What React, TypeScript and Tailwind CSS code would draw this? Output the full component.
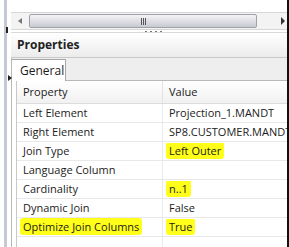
import React from 'react';

const rows: { name: string; value: string; markName?: boolean; markValue?: boolean }[] = [
  { name: 'Left Element', value: 'Projection_1.MANDT' },
  { name: 'Right Element', value: 'SP8.CUSTOMER.MANDT' },
  { name: 'Join Type', value: 'Left Outer', markValue: true },
  { name: 'Language Column', value: '' },
  { name: 'Cardinality', value: 'n..1', markValue: true },
  { name: 'Dynamic Join', value: 'False' },
  { name: 'Optimize Join Columns', value: 'True', markName: true, markValue: true },
];

const Mark = ({ children }: { children: React.ReactNode }) => (
  <span className="-mx-[3px] rounded-[3px] bg-[#ffff1a] px-[3px] py-[1px]">{children}</span>
);

export default function App() {
  return (
    <div
      className="flex h-[247px] w-[289px] overflow-hidden bg-white text-[11px] text-[#1b1b1b]"
      style={{ fontFamily: '"Open Sans", "Noto Sans", sans-serif' }}
    >
      {/* left sash */}
      <div className="relative w-[11px] shrink-0">
        <div className="absolute left-[4px] top-0 h-full w-[3px] bg-[#c3cad3]" />
        <div className="absolute left-[6px] top-[27px] h-[6px] w-[2px] bg-[#222]" />
        <div className="absolute left-[8px] top-[75px] h-0 w-0 border-y-[3px] border-l-[4px] border-y-transparent border-l-[#222]" />
      </div>

      <div className="flex min-w-0 flex-1 flex-col">
        <div className="h-[12px] shrink-0" />

        {/* horizontal scrollbar */}
        <div className="flex h-[18px] shrink-0 items-center border-y border-[#d6d6d6] bg-[#f3f3f3]">
          <div className="flex w-[18px] justify-center">
            <div className="h-0 w-0 border-y-[3px] border-r-[4px] border-y-transparent border-r-[#777]" />
          </div>
          <div className="relative flex h-[14px] flex-1 items-center justify-center rounded-[2px] border border-[#a0a0a8] bg-gradient-to-b from-[#f4f4f6] to-[#c9c9d3]">
            <div className="flex gap-[1px]">
              <div className="h-[7px] w-[1px] bg-[#555]" />
              <div className="h-[7px] w-[1px] bg-[#555]" />
              <div className="h-[7px] w-[1px] bg-[#555]" />
            </div>
          </div>
          <div className="flex w-[30px] justify-end pr-[2px]">
            <div className="h-0 w-0 border-y-[4px] border-l-[4px] border-y-transparent border-l-[#333]" />
          </div>
        </div>

        {/* sash */}
        <div className="flex h-[3px] shrink-0 justify-center gap-[3px] border-b border-[#d8d8d8] pl-[8px]">
          {[0, 1, 2, 3].map((i) => (
            <div key={i} className="mt-[1px] h-[1px] w-[2px] bg-[#777]" />
          ))}
        </div>

        {/* properties title */}
        <div className="flex h-[25px] shrink-0 items-center border-b border-[#c9c9c9] bg-gradient-to-b from-white to-[#ececec] pl-[6px]">
          <span className="text-[12px] font-bold text-[#222]">Properties</span>
        </div>

        {/* tab strip */}
        <div className="flex h-[23px] shrink-0 items-end border-b border-l border-[#b8b8b8] bg-[#eeeeee]">
          <div className="-mb-[1px] flex h-[22px] w-[54px] items-center border-r border-t border-[#a8a8a8] bg-white pl-[8px] text-[12px]">
            General
          </div>
        </div>

        {/* table */}
        <div className="flex flex-1 border-l border-[#b8b8b8] pl-[4px]">
          <div className="flex min-w-0 flex-1 flex-col border-l border-[#c8c8c8]">
            <div className="flex h-[23px] shrink-0 items-center border-b border-[#dcdcdc] bg-gradient-to-b from-white to-[#f1f1f1]">
              <div className="w-[145px] pl-[6px]">Property</div>
              <div className="h-full w-px bg-[#e2e2e2]" />
              <div className="pl-[6px]">Value</div>
            </div>
            {rows.map((r) => (
              <div key={r.name} className="flex h-[19px] shrink-0 items-center border-b border-[#e8e8e8]">
                <div className="w-[145px] shrink-0 whitespace-nowrap pl-[6px]">
                  {r.markName ? <Mark>{r.name}</Mark> : r.name}
                </div>
                <div className="h-full w-px shrink-0 bg-[#e6ebf0]" />
                <div className="min-w-0 flex-1 overflow-hidden whitespace-nowrap pl-[6px]">
                  {r.markValue ? <Mark>{r.value}</Mark> : r.value}
                </div>
              </div>
            ))}
            <div className="flex flex-1">
              <div className="w-[145px]" />
              <div className="h-full w-px bg-[#e6ebf0]" />
            </div>
          </div>
        </div>
      </div>

      <div className="w-[2px] shrink-0 bg-[#111]" />
    </div>
  );
}
